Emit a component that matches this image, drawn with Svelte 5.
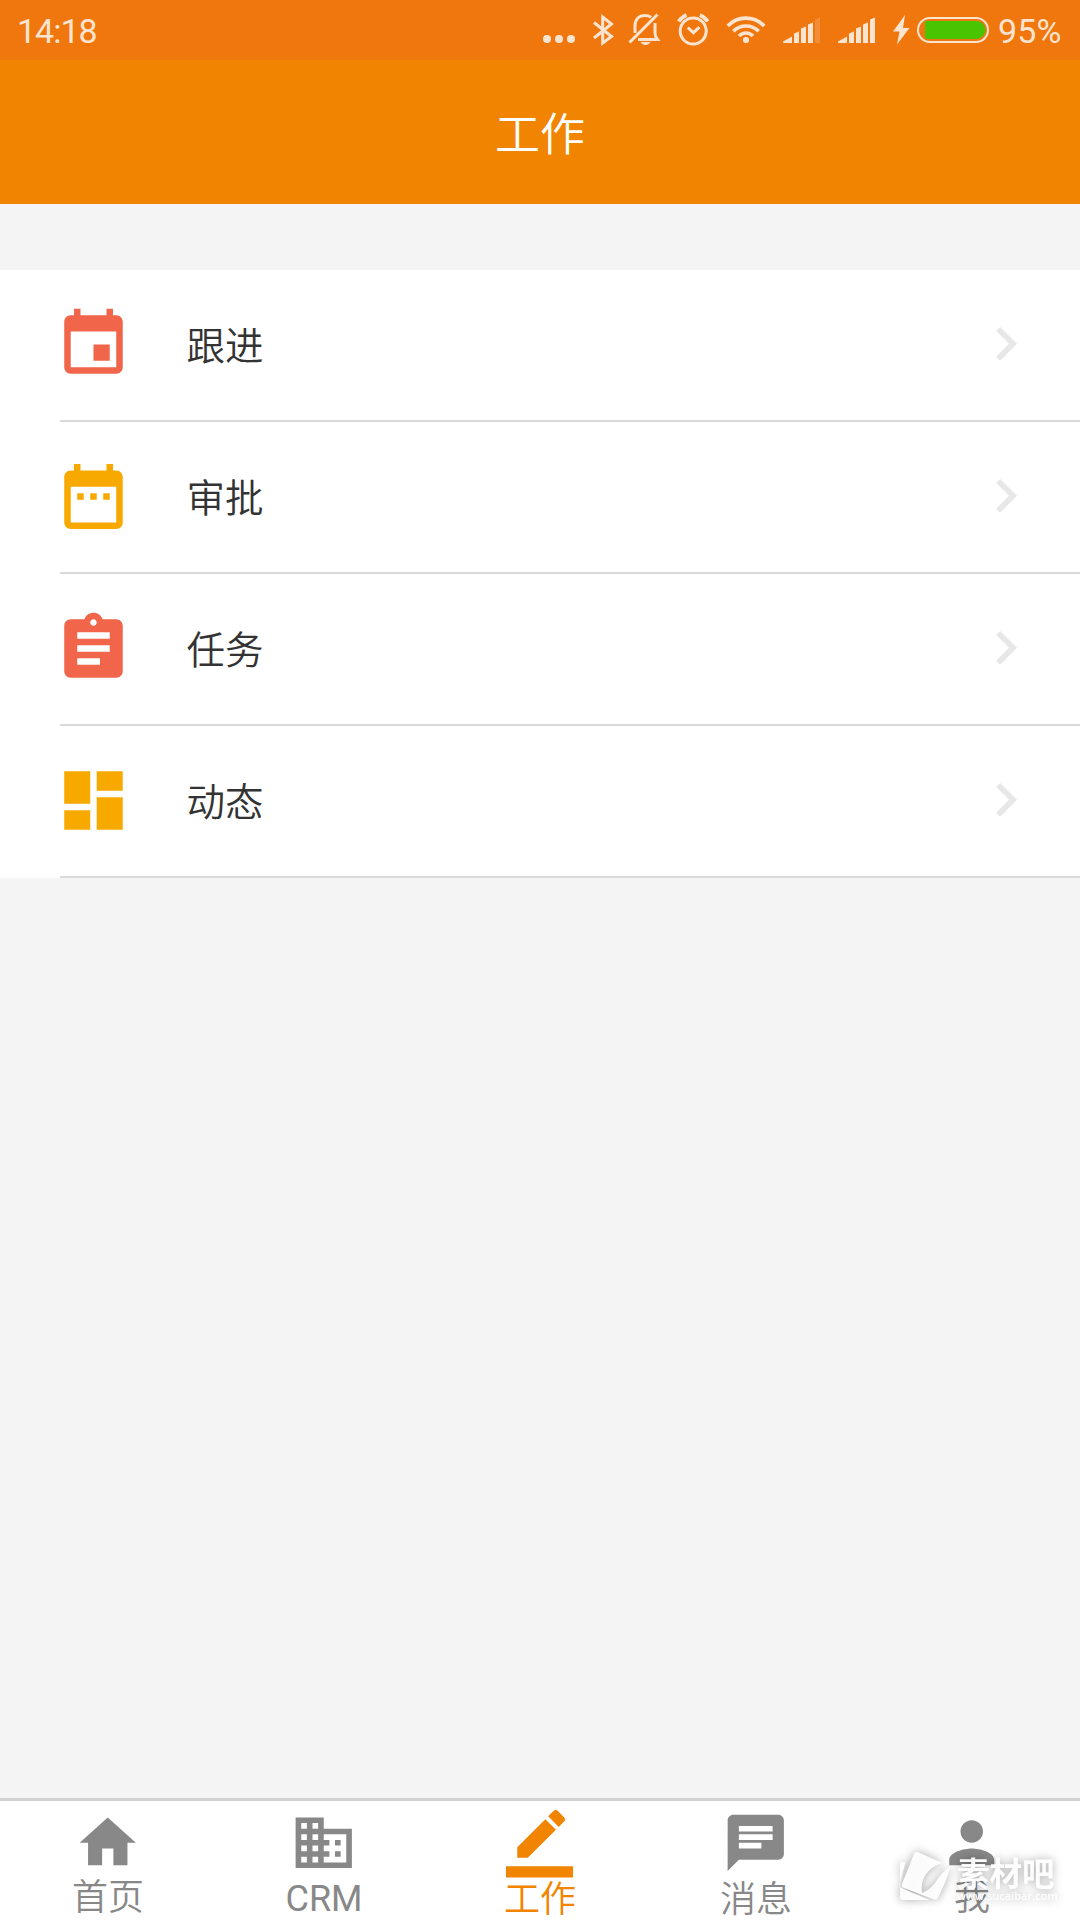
<script>
  const rows = [
    { label: '跟进', color: 'red', d: 'M17 12h-5v5h5v-5zM16 1v2H8V1H6v2H5c-1.11 0-2 .9-2 2v14c0 1.1.9 2 2 2h14c1.1 0 2-.9 2-2V5c0-1.1-.9-2-2-2h-1V1h-2zm3 18H5V8h14v11z' },
    { label: '审批', color: 'amber', d: 'M9 11H7v2h2v-2zm4 0h-2v2h2v-2zm4 0h-2v2h2v-2zm2-7h-1V2h-2v2H8V2H6v2H5c-1.11 0-2 .9-2 2v14c0 1.1.9 2 2 2h14c1.1 0 2-.9 2-2V6c0-1.1-.9-2-2-2zm0 16H5V9h14v11z' },
    { label: '任务', color: 'red', d: 'M19 3h-4.18C14.4 1.84 13.3 1 12 1c-1.3 0-2.4.84-2.82 2H5c-1.1 0-2 .9-2 2v14c0 1.1.9 2 2 2h14c1.1 0 2-.9 2-2V5c0-1.1-.9-2-2-2zm-7 0c.55 0 1 .45 1 1s-.45 1-1 1-1-.45-1-1 .45-1 1-1zm2 14H7v-2h7v2zm3-4H7v-2h10v2zm0-4H7V7h10v2z' },
    { label: '动态', color: 'amber', d: 'M3 13h8V3H3v10zm0 8h8v-6H3v6zm10 0h8V11h-8v10zm0-18v6h8V3h-8z' },
  ];
  const tabs = [
    { label: '首页', d: 'M10 20v-6h4v6h5v-8h3L12 3 2 12h3v8z' },
    { label: 'CRM', latin: true, d: 'M12 7V3H2v18h20V7H12zM6 19H4v-2h2v2zm0-4H4v-2h2v2zm0-4H4V9h2v2zm0-4H4V5h2v2zm4 12H8v-2h2v2zm0-4H8v-2h2v2zm0-4H8V9h2v2zm0-4H8V5h2v2zm10 12h-8v-2h2v-2h-2v-2h2v-2h-2V9h8v10zm-2-8h-2v2h2v-2zm0 4h-2v2h2v-2z' },
    { label: '工作', active: true, low: true, d: 'M17.75 7L14 3.25l-10 10V17h3.75l10-10zm2.96-2.96c.39-.39.39-1.02 0-1.41L18.37.29c-.39-.39-1.02-.39-1.41 0L15 2.25 18.75 6l1.96-1.96zM0 20h24v4H0z' },
    { label: '消息', low: true, d: 'M20 2H4c-1.1 0-1.99.9-1.99 2L2 22l4-4h14c1.1 0 2-.9 2-2V4c0-1.1-.9-2-2-2zM6 9h12v2H6V9zm8 5H6v-2h8v2zm4-6H6V6h12v2z' },
    { label: '我', d: 'M12 12c2.21 0 4-1.79 4-4s-1.79-4-4-4-4 1.79-4 4 1.79 4 4 4zm0 2c-2.67 0-8 1.34-8 4v2h16v-2c0-2.66-5.33-4-8-4z' },
  ];
</script>

<div class="screen">
  <div class="status">
    <span class="time">14:18</span>
    <div class="sys">
      <svg width="45" height="60" viewBox="540 0 45 60"><circle cx="547" cy="39" r="4" /><circle cx="559" cy="39" r="4" /><circle cx="571" cy="39" r="4" /></svg>
      <svg class="line" width="35" height="60" viewBox="585 0 35 60"><path d="M594 22.500l17.500 14L602.700 43V17l8.800 7L594 38" /></svg>
      <svg class="line" width="48" height="60" viewBox="620 0 48 60"><path d="M657.500 14.500L629.500 42.500M635 33V26c0-6.500 4-10.500 10-10.500 2.500 0 4.500.6 6 1.800M655 23v10c0 2.500 1 4.500 2.500 6.500H638" /><path class="solid" d="M640.500 42h10c-1 2-3 3-5 3s-4-1-5-3z" /></svg>
      <svg class="line" width="47" height="60" viewBox="668 0 47 60"><circle cx="693.200" cy="31" r="13" /><path d="M687.800 27.500l5.600 5.200 6-5.600" /><path class="thick" d="M678.700 21.500c1.800-3 4.500-5 7.800-6.500M707.700 21.500c-1.800-3-4.500-5-7.800-6.500" /></svg>
      <svg class="line" width="60" height="60" viewBox="715 0 60 60"><path class="thick" d="M727.800 26c10-10.500 26.400-10.500 36.400 0M733.300 31.200c7-7 18.400-7 25.400 0M739 36c4-4 10-4 14 0" /><circle class="solid" cx="746" cy="40" r="3.100" /></svg>
      <svg width="53" height="60" viewBox="775 0 53 60"><path d="M783 43v-1.500l9-5V43zM794 43V33.500l5-2V43zM801 43V28.500l5-2V43zM808 43V24.500l5-2V43z" /><path class="faint" d="M815 43V19.500l5-2V43z" /></svg>
      <svg width="57" height="60" viewBox="828 0 57 60"><path d="M838 43v-1.500l9-5V43zM849 43V33.500l5-2V43zM856 43V28.500l5-2V43zM863 43V24.500l5-2V43zM870 43V19.500l5-2V43z" /></svg>
      <svg width="28" height="60" viewBox="885 0 28 60"><path d="M905 15l-12 16.500h6.500L897 44.500l12.500-16.500H903z" /></svg>
      <svg width="80" height="60" viewBox="913 0 80 60"><rect class="case" x="918" y="18" width="70" height="24" rx="12" /><path class="charge" d="M925 21h51.500a9 9 0 0 1 0 18H927q-2 0-2-2z" /></svg>
      <span class="percent">95%</span>
    </div>
  </div>
  <header>工作</header>
  <main>
    <ul>
      {#each rows as row}
        <li>
          <svg class="icon {row.color}" viewBox="-0.150 -0.150 24 24"><path d={row.d} /></svg>
          <span>{row.label}</span>
          <svg class="chevron" viewBox="0 0 24 24"><path d="M10 6L8.590 7.410 13.170 12l-4.580 4.590L10 18l6-6z" /></svg>
        </li>
      {/each}
    </ul>
  </main>
  <nav>
    {#each tabs as tab}
      <div class="tab" class:active={tab.active} class:low={tab.low}>
        <svg viewBox="0 0 24 24"><path d={tab.d} /></svg>
        <span class:latin={tab.latin}>{tab.label}</span>
      </div>
    {/each}
  </nav>
  <div class="mark">
    <svg width="54" height="52" viewBox="0 0 54 52">
      <path d="M2 14q0-2 2-2h3.500L1.500 34q-.5 3 2 4l28 12H5q-3 0-3-3z" />
      <path d="M16 4q1-3 4-2l24 11C32 17 22 26 24 43c5-2 9-5 13-10 4-6 7-11 15-16-2 10-7 20-11 29q-2 5-6 3L6 38q-3-1-2-4z" />
    </svg>
    <div class="words"><b>素材吧</b><small>www.sucaibar.com</small></div>
  </div>
</div>

<style>
  :global(body) { margin: 0; background: #f4f4f4; }
  .screen {
    position: relative;
    width: 1080px;
    height: 1920px;
    overflow: hidden;
    display: flex;
    flex-direction: column;
    background: #f4f4f4;
    font-family: Roboto, "Noto Sans CJK SC", sans-serif;
    font-weight: 350;
  }
  svg { display: block; flex: none; fill: currentColor; }
  .status {
    height: 60px;
    flex: none;
    display: flex;
    justify-content: space-between;
    padding: 0 17px;
    background: #f0770e;
    color: #fde4d0;
    font-size: 34px;
    font-weight: 400;
    line-height: 62px;
  }
  .time { letter-spacing: -1px; }
  .sys { display: flex; width: 523px; }
  .percent { margin-left: 5px; letter-spacing: 0.1px; }
  .line { fill: none; stroke: currentColor; stroke-width: 3; }
  .line .thick { stroke-width: 3.6; }
  .line .solid { fill: currentColor; stroke: none; }
  .faint { opacity: 0.2; }
  .case { fill: none; stroke: currentColor; stroke-width: 2; }
  .charge { fill: #48c400; }
  header {
    height: 144px;
    flex: none;
    background: #f18400;
    color: #fff;
    font-size: 45px;
    line-height: 151px;
    text-align: center;
  }
  main { flex: 1; padding-top: 66px; }
  ul { margin: 0; padding: 0; list-style: none; background: #fff; }
  li {
    height: 152px;
    box-sizing: border-box;
    display: flex;
    align-items: center;
    padding: 0 41px 5px 54px;
    background: linear-gradient(#d9d9d9, #d9d9d9) 60px 100% / 100% 2px no-repeat;
    color: #333;
    font-size: 38.500px;
  }
  li span { flex: 1; margin: 0 0 1px 54.500px; }
  .icon { width: 78px; height: 78px; }
  .red { color: #f1664b; }
  .amber { color: #f8a900; }
  .chevron { width: 67.500px; height: 67.500px; color: #e7e7e7; }
  nav {
    height: 119px;
    flex: none;
    display: flex;
    border-top: 3px solid #d2d2d2;
    background: #fff;
    color: #888;
  }
  .tab {
    flex: 1;
    display: flex;
    flex-direction: column;
    align-items: center;
    padding-top: 8px;
    font-size: 36px;
  }
  .tab.active { padding-top: 9px; }
  .tab svg { width: 67.500px; height: 67.500px; margin-right: 1px; }
  .tab span { line-height: 40px; padding-top: 1px; }
  .tab.low span { padding-top: 3px; }
  .tab.active span, .tab .latin { padding-top: 2px; }
  .tab .latin { font-weight: 400; }
  .active { color: #f18400; }
  .mark {
    position: absolute;
    left: 898px;
    top: 1850px;
    display: flex;
    gap: 5px;
    color: rgba(255, 255, 255, 0.95);
    filter: drop-shadow(0 0 5px rgba(0, 0, 0, 0.36));
  }
  .words { display: flex; flex-direction: column; padding-top: 9px; }
  .words b { font-size: 32.500px; line-height: 33px; height: 31px; }
  .words small { font: 600 11px/12px "Open Sans", sans-serif; }
</style>
